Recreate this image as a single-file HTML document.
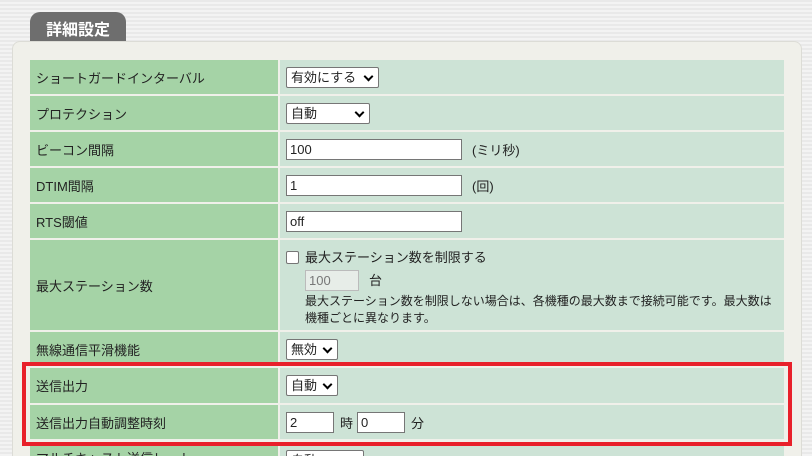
<!DOCTYPE html>
<html style="width:812px;height:456px;overflow:hidden"><head><meta charset="utf-8"><style>
*{margin:0;padding:0;box-sizing:border-box}
body{width:812px;height:456px;overflow:hidden;position:relative;font-family:"Liberation Sans","Noto Sans CJK JP",sans-serif;font-size:13px;color:#222;
background:repeating-linear-gradient(180deg,#e9e9e9 0,#e9e9e9 2px,#f3f3f3 2px,#f3f3f3 4px)}
.tab{position:absolute;left:30px;top:12px;width:96px;height:30px;background:#6e6e6e;border-radius:10px 10px 0 0;color:#fff;font-weight:bold;font-size:16px;padding:4px 0 0 16px}
.panel{position:absolute;left:12px;top:41px;width:790px;height:415px;background:#f0f0ea;border-radius:8px 8px 0 0;border:1px solid #dcdcd6;border-bottom:none}
.r{position:absolute;left:30px;width:754px}
.l{position:absolute;left:0;top:0;bottom:0;width:248px;background:#a5d3a6;padding-left:6px;display:flex;align-items:center}
.v{position:absolute;left:250px;right:0;top:0;bottom:0;background:#cde3d6;padding-left:6px;display:flex;align-items:center}
.sel{display:inline-block;height:21px;border:1px solid #767676;border-radius:2px;background:#fff;padding:1px 4px;line-height:17px;position:relative}
.sel:after{content:"";position:absolute;right:6px;top:5px;width:5px;height:5px;border-right:2px solid #000;border-bottom:2px solid #000;transform:rotate(45deg)}
.in{display:inline-block;height:21px;border:1px solid #767676;background:#fff;padding:1px 3px;line-height:17px}
.red{position:absolute;left:22px;top:362px;width:770px;height:84px;border:4px solid #e8202a}
</style></head><body>
<div class="tab">詳細設定</div>
<div class="panel"></div>
<div class="r" style="top:60px;height:34px"><div class="l">ショートガードインターバル</div><div class="v"><span class="sel" style="width:93px">有効にする</span></div></div>
<div class="r" style="top:96px;height:34px"><div class="l">プロテクション</div><div class="v"><span class="sel" style="width:84px">自動</span></div></div>
<div class="r" style="top:132px;height:34px"><div class="l">ビーコン間隔</div><div class="v"><span class="in" style="width:176px">100</span><span style="margin-left:10px">(ミリ秒)</span></div></div>
<div class="r" style="top:168px;height:34px"><div class="l">DTIM間隔</div><div class="v"><span class="in" style="width:176px">1</span><span style="margin-left:10px">(回)</span></div></div>
<div class="r" style="top:204px;height:34px"><div class="l">RTS閾値</div><div class="v"><span class="in" style="width:176px">off</span></div></div>
<div class="r" style="top:240px;height:90px"><div class="l">最大ステーション数</div><div class="v" style="display:block;padding-top:9px;line-height:18px">
<div><span style="display:inline-block;width:13px;height:13px;border:1px solid #767676;border-radius:2px;background:#fff;vertical-align:-2px;margin-right:6px"></span>最大ステーション数を制限する</div>
<div style="margin:3px 0 2px 19px"><span class="in" style="width:54px;background:#e7ede8;color:#777;border-color:#bbb">100</span><span style="margin-left:10px">台</span></div>
<div style="padding-left:19px;padding-right:10px;font-size:12px;line-height:17px">最大ステーション数を制限しない場合は、各機種の最大数まで接続可能です。最大数は機種ごとに異なります。</div></div></div>
<div class="r" style="top:332px;height:34px"><div class="l">無線通信平滑機能</div><div class="v"><span class="sel" style="width:52px">無効</span></div></div>
<div class="r" style="top:368px;height:35px"><div class="l">送信出力</div><div class="v"><span class="sel" style="width:52px">自動</span></div></div>
<div class="r" style="top:405px;height:34px"><div class="l">送信出力自動調整時刻</div><div class="v"><span class="in" style="width:48px">2</span><span style="margin:0 4px 0 6px">時</span><span class="in" style="width:48px">0</span><span style="margin-left:6px">分</span></div></div>
<div class="r" style="top:446px;height:10px;overflow:hidden"><div class="l" style="align-items:flex-start;padding-top:2px">マルチキャスト送信レート</div><div class="v" style="align-items:flex-start;padding-top:4px"><span class="sel" style="width:78px">自動</span></div></div>
<div class="red"></div>
</body></html>
